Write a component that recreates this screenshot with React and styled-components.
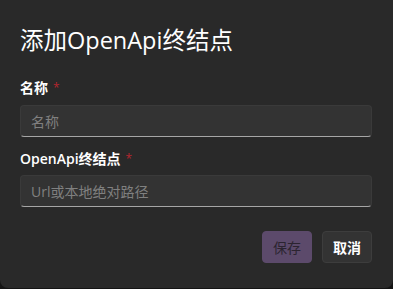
import React from 'react';
import styled, { createGlobalStyle } from 'styled-components';

const GlobalStyle = createGlobalStyle`
  html, body {
    margin: 0;
    padding: 0;
    background: #141414;
  }
  body {
    font-family: "Open Sans", "Noto Sans CJK SC", sans-serif;
  }
`;

const Surface = styled.div`
  box-sizing: border-box;
  width: 393px;
  height: 288px;
  background: #292929;
  border-radius: 0 0 8px 8px;
  padding: 24px 21px 0 20px;
  display: flex;
  flex-direction: column;
`;

const Title = styled.h2`
  margin: 0;
  font-size: 23.5px;
  line-height: 32px;
  font-weight: 400;
  color: #ffffff;
`;

const Form = styled.form`
  display: flex;
  flex-direction: column;
  margin-top: 22px;
`;

const Field = styled.div`
  display: flex;
  flex-direction: column;
  gap: ${(p) => p.$inner || 6}px;
  margin-bottom: ${(p) => p.$gap || 0}px;
`;

const Label = styled.label`
  font-size: 14px;
  line-height: 20px;
  font-weight: 600;
  color: #ffffff;
`;

const Star = styled.span`
  color: #b3262f;
  font-size: 12px;
  font-weight: 400;
  margin-left: 5px;
  vertical-align: 1px;
`;

const Input = styled.input`
  box-sizing: border-box;
  height: 32px;
  width: 100%;
  padding: 0 10px;
  background: #333333;
  border: 1px solid #3a3a3a;
  border-bottom: 1px solid #a6a6a6;
  border-radius: 4px;
  color: #ffffff;
  font-family: inherit;
  font-size: 14px;

  &::placeholder {
    color: #808080;
  }
  &:focus {
    outline: none;
  }
`;

const Actions = styled.div`
  display: flex;
  justify-content: flex-end;
  gap: 10px;
  margin-top: 24px;
`;

const Button = styled.button`
  box-sizing: border-box;
  height: 32px;
  min-width: 50px;
  padding: 0 10px;
  border-radius: 4px;
  font-family: inherit;
  font-size: 14px;
  border: 1px solid ${(p) => (p.$primary ? '#5c4a6b' : '#3d3d3d')};
  background: ${(p) => (p.$primary ? '#5c4a6b' : '#333333')};
  color: ${(p) => (p.$primary ? '#2b2430' : '#ffffff')};
  font-weight: ${(p) => (p.$primary ? 400 : 600)};
  cursor: pointer;
`;

export default function App() {
  return (
    <>
      <GlobalStyle />
      <Surface>
        <Title>添加OpenApi终结点</Title>
        <Form onSubmit={(e) => e.preventDefault()}>
          <Field $inner={7} $gap={12}>
            <Label>
              名称<Star>*</Star>
            </Label>
            <Input placeholder="名称" />
          </Field>
          <Field>
            <Label>
              OpenApi终结点<Star>*</Star>
            </Label>
            <Input placeholder="Url或本地绝对路径" />
          </Field>
          <Actions>
            <Button $primary disabled type="submit">
              保存
            </Button>
            <Button type="button">取消</Button>
          </Actions>
        </Form>
      </Surface>
    </>
  );
}
